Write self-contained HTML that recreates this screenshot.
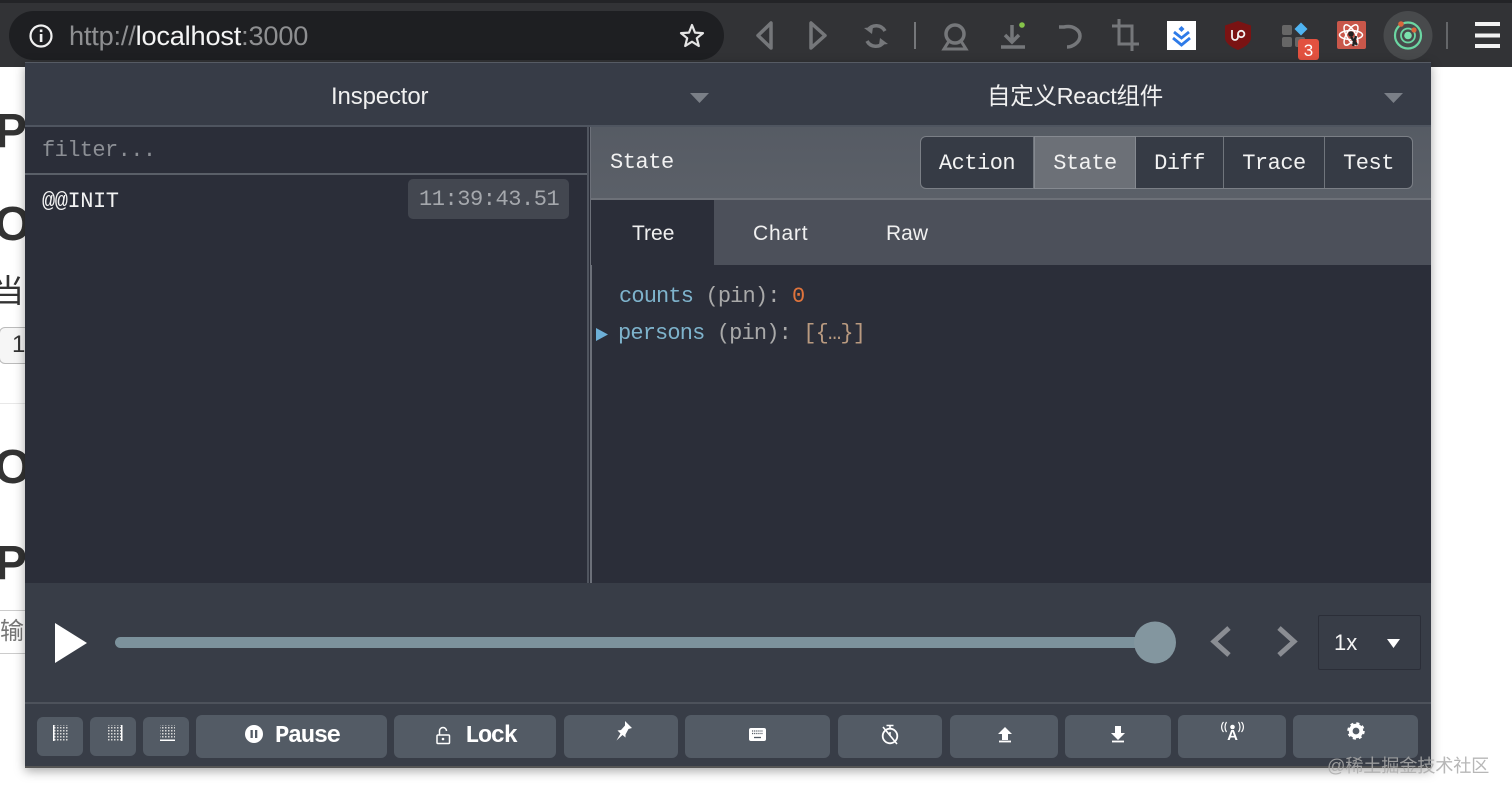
<!DOCTYPE html>
<html><head><meta charset="utf-8"><style>
html,body{margin:0;padding:0;background:#fff}
body{width:1512px;height:798px;position:relative;overflow:hidden;font-family:"Liberation Sans","Noto Sans CJK SC",sans-serif}
.a{position:absolute;white-space:nowrap}
.m{font-family:"Liberation Mono","Noto Sans CJK SC",monospace;font-size:22px;line-height:26px;letter-spacing:-.45px}
.btn{position:absolute;top:715px;height:43px;background:#535b65;border-radius:6px;color:#fff;display:flex;align-items:center;justify-content:center}
.sbtn{top:717px;height:39px}
.seg{position:absolute;top:137px;height:51px;background:#363b45;color:#f2f2f2;font:22px "Liberation Mono",monospace;letter-spacing:-.5px;line-height:50px;text-align:center;box-sizing:border-box;border-right:1px solid #70757c;padding-top:2px}
svg{position:absolute;overflow:visible}
</style></head><body>

<!-- page behind -->
<div class="a" style="left:-5px;top:92px;font:bold 48px/80px 'Liberation Sans';color:#333">P</div>
<div class="a" style="left:-6px;top:185px;font:bold 48px/80px 'Liberation Sans';color:#333">O</div>
<div class="a" style="left:-8px;top:272px;font:32px/38px 'Liberation Sans','Noto Sans CJK SC';color:#333">当</div>
<div class="a" style="left:-1px;top:327px;width:60px;height:37px;border:1px solid #bbb;border-radius:6px;background:#f6f6f6;box-sizing:border-box"></div>
<div class="a" style="left:12px;top:331px;font:24px/28px 'Liberation Sans';color:#333">1</div>
<div class="a" style="left:0;top:403px;width:40px;height:1px;background:#e8e8e8"></div>
<div class="a" style="left:-6px;top:428px;font:bold 48px/80px 'Liberation Sans';color:#333">O</div>
<div class="a" style="left:-5px;top:524px;font:bold 48px/80px 'Liberation Sans';color:#333">P</div>
<div class="a" style="left:-10px;top:610px;width:60px;height:44px;border:1px solid #ccc;background:#fff;box-sizing:border-box"></div>
<div class="a" style="left:0;top:617px;font:24px/30px 'Liberation Sans','Noto Sans CJK SC';color:#777">输</div>

<!-- browser toolbar -->
<div class="a" style="left:0;top:0;width:1512px;height:67px;background:#323336"></div>
<div class="a" style="left:0;top:0;width:1512px;height:3px;background:#232427"></div>
<div class="a" style="left:9px;top:11px;width:715px;height:49px;border-radius:25px;background:#1e1f22"></div>
<svg style="left:0;top:0" width="1512" height="67" fill="none">
 <circle cx="41" cy="36" r="10.5" stroke="#f0f0f0" stroke-width="2.2"/>
 <rect x="39.8" y="34" width="2.6" height="8" fill="#f0f0f0"/><rect x="39.8" y="29.5" width="2.6" height="2.6" fill="#f0f0f0"/>
 <path d="M692 25l3 7.600 8 .5-6.200 5.100 2 7.800-6.800-4.300-6.800 4.300 2-7.800-6.200-5.100 8-.5z" stroke="#e4e4e4" stroke-width="2.200" stroke-linejoin="round"/>
 <g stroke="#75777a" stroke-width="3.500">
  <path d="M771 23v25l-13-12.500z" stroke-linejoin="round"/>
  <path d="M811 23v25l14-12.500z" stroke-linejoin="round"/>
  <path d="M885 31a10 10 0 0 0-17-1M867 41a10 10 0 0 0 17 1" stroke-width="3.500"/>
  <path d="M864 28l8 6 1-7zM888 44l-8-6-1 7z" fill="#75777a" stroke="none"/>
  <path d="M915 22v27" stroke-width="2"/>
  <circle cx="955" cy="34" r="9"/><path d="M949 41l-5 8h22l-5-8" stroke-width="3"/>
  <path d="M1012 25v17M1005 35l7 7 7-7"/><path d="M1001 47h24"/>
  <path d="M1064 27c9-2 16 3 16 9s-7 11-13 11M1059 27h6" stroke-width="3.500"/>
  <path d="M1119 19v25h20M1112 26h20v25" stroke-width="3"/>
  <path d="M1447 22v27" stroke-width="1.500"/>
 </g>
 <circle cx="1022" cy="25" r="2.800" fill="#86c44a"/>
 <!-- jira-like -->
 <rect x="1167" y="21" width="29" height="29" fill="#fff"/>
 <path d="M1181.500 26l3 3-3 3-3-3z" fill="#2e7be8"/>
 <path d="M1174 32l7.500 6 7.500-6M1173 38l8.500 7 8.500-7" stroke="#2e7be8" stroke-width="2.800"/>
 <!-- ublock -->
 <path d="M1238 21l13 4.500v12c0 6-7 10-13 12.500-6-2.500-13-6.500-13-12.500v-12z" fill="#7a1313"/>
 <path d="M1232 30v7a3 3 0 0 0 6 0v-3M1238 34a3.200 3.200 0 1 1 6.400 0 3.200 3.200 0 1 1-6.400 0" stroke="#f2f2f2" stroke-width="1.800"/>
 <!-- apps -->
 <rect x="1282" y="25" width="10" height="10" rx="2" fill="#666"/>
 <rect x="1282" y="37" width="10" height="10" rx="2" fill="#666"/>
 <rect x="1295" y="37" width="10" height="10" rx="2" fill="#666"/>
 <path d="M1301 22.500l6.500 6.500-6.500 6.500-6.500-6.500z" fill="#4fb4f2"/>
 <rect x="1298" y="39" width="21" height="21" rx="3" fill="#e2513f"/>
 <!-- react -->
 <rect x="1337" y="21" width="29" height="28" rx="2" fill="#c9574a"/>
 <g stroke="#fff" stroke-width="1.500"><ellipse cx="1351" cy="35" rx="11.500" ry="4.500"/><ellipse cx="1351" cy="35" rx="11.500" ry="4.500" transform="rotate(60 1351 35)"/><ellipse cx="1351" cy="35" rx="11.500" ry="4.500" transform="rotate(120 1351 35)"/></g>
 <circle cx="1351" cy="34" r="2.800" fill="#222"/><path d="M1351 37l6 8M1356 36l-3 10" stroke="#222" stroke-width="2.500"/>
 <!-- active -->
 <circle cx="1408" cy="35.500" r="24.500" fill="#484a4c"/>
 <circle cx="1408" cy="35.500" r="13" stroke="#6bd6a2" stroke-width="2.200"/>
 <circle cx="1408" cy="35.500" r="7" stroke="#6bd6a2" stroke-width="1.800"/>
 <circle cx="1408" cy="35.500" r="3.800" fill="#7be0ad"/>
 <circle cx="1401" cy="24" r="2.800" fill="#d9663c"/><circle cx="1414" cy="30" r="2.600" fill="#d9663c"/>
 <path d="M1475 24h25M1475 35.500h25M1475 46h25" stroke="#f2f2f2" stroke-width="4"/>
</svg>
<div class="a" style="left:69px;top:20px;font:27.200px/31px 'Liberation Sans';color:#8e8f91;letter-spacing:-.2px">http://<span style="color:#f4f4f4">localhost</span>:3000</div>
<div class="a" style="left:1298px;top:39px;width:21px;height:21px;font:17px/23px 'Liberation Sans';color:#fff;text-align:center">3</div>

<!-- devtools panel -->
<div class="a" style="left:25px;top:62px;width:1406px;height:706px;background:#2b2e39;box-shadow:0 3px 10px rgba(0,0,0,.35)"></div>
<div class="a" style="left:25px;top:62px;width:1406px;height:64px;background:#373c47;border-top:1px solid #565b64;box-sizing:border-box"></div>
<div class="a" style="left:25px;top:125px;width:1406px;height:2px;background:#4f5560"></div>
<div class="a" style="left:331px;top:83px;font:24px/28px 'Liberation Sans';color:#f0f0f0;letter-spacing:-.15px">Inspector</div>
<div class="a" style="left:987px;top:82px;font:23.500px/28px 'Liberation Sans','Noto Sans CJK SC';color:#f0f0f0;letter-spacing:-.3px">自定义React组件</div>
<svg style="left:0;top:0" width="1512" height="130"><path d="M690 93h19l-9.500 10zM1384 93h19l-9.500 10z" fill="#7a7f87"/></svg>

<!-- left pane -->
<div class="a" style="left:25px;top:173px;width:562px;height:2px;background:#5a5f68"></div>
<div class="a" style="left:587px;top:127px;width:2px;height:456px;background:#50555f"></div>
<div class="a" style="left:590px;top:127px;width:1.500px;height:456px;background:#6c7079"></div>
<div class="a m" style="left:42px;top:138px;color:#8c8f95;letter-spacing:-.6px">filter...</div>
<div class="a m" style="left:42px;top:189px;color:#f2f2f2;">@@INIT</div>
<div class="a" style="left:408px;top:179px;width:161px;height:40px;border-radius:5px;background:#434750"></div>
<div class="a m" style="left:419px;top:187px;color:#a5a8ad">11:39:43.51</div>

<!-- right pane -->
<div class="a" style="left:591px;top:127px;width:840px;height:71px;background:linear-gradient(#565b64,#5b6068)"></div>
<div class="a" style="left:591px;top:198px;width:840px;height:2px;background:#6d7178"></div>
<div class="a m" style="left:610px;top:150px;color:#f2f2f2">State</div>
<div class="a" style="left:920px;top:136px;width:493px;height:53px;border:1px solid #7b7f86;border-radius:6px;box-sizing:border-box;background:#363b45"></div>
<div class="seg" style="left:921px;width:113px;border-radius:5px 0 0 5px;background:transparent">Action</div>
<div class="seg" style="left:1034px;width:102px;background:#6c7077;border:1px solid #858990;top:136px;height:53px;color:#f2f2f2;padding-top:2px">State</div>
<div class="seg" style="left:1136px;width:88px">Diff</div>
<div class="seg" style="left:1224px;width:101px">Trace</div>
<div class="seg" style="left:1325px;width:87px;border:0;border-radius:0 5px 5px 0;background:transparent">Test</div>

<div class="a" style="left:591px;top:200px;width:840px;height:65px;background:#4c505a"></div>
<div class="a" style="left:591px;top:200px;width:123px;height:65px;background:#2b2e39"></div>
<div class="a" style="left:632px;top:220px;font:21px/27px 'Liberation Sans';color:#f0f0f0">Tree</div>
<div class="a" style="left:753px;top:220px;font:21px/27px 'Liberation Sans';color:#f0f0f0;letter-spacing:.8px">Chart</div>
<div class="a" style="left:886px;top:220px;font:21px/27px 'Liberation Sans';color:#f0f0f0">Raw</div>

<div class="a m" style="left:619px;top:284px;color:#a9a9a9;letter-spacing:-.85px"><span style="color:#7eb3cc">counts</span> (pin): <span style="color:#e0743c">0</span></div>
<div class="a m" style="left:618px;top:321px;color:#a9a9a9;letter-spacing:-.85px"><span style="color:#7eb3cc">persons</span> (pin): <span style="color:#b99a80">[{…}]</span></div>
<svg style="left:0;top:0" width="700" height="400"><path d="M596 328l12 6.500-12 6.500z" fill="#6db0d8"/></svg>

<!-- slider bar -->
<div class="a" style="left:25px;top:583px;width:1406px;height:120px;background:#383d47"></div>
<div class="a" style="left:25px;top:702px;width:1406px;height:2px;background:#4d525b"></div>
<div class="a" style="left:25px;top:704px;width:1406px;height:64px;background:#383d47;border-bottom:2px solid #555;box-sizing:border-box"></div>
<svg style="left:0;top:580px" width="1512" height="120">
 <path d="M55 43l32 20-32 20z" fill="#fff"/>
 <rect x="115" y="57" width="1030" height="11" rx="5.500" fill="#7c929c"/>
 <circle cx="1155" cy="62.500" r="21" fill="#83969f"/>
 <path d="M1229 48l-15 13.500 15 13.500M1279 48l15 13.500-15 13.500" fill="none" stroke="#8a8d93" stroke-width="5"/>
 <path d="M1387 59h13l-6.500 9z" fill="#fff"/>
</svg>
<div class="a" style="left:1318px;top:615px;width:103px;height:55px;border:1px solid #2b2e38;border-radius:2px;box-sizing:border-box"></div>
<div class="a" style="left:1334px;top:629px;font:22px/27px 'Liberation Sans';color:#f5f5f5">1x</div>

<!-- bottom buttons -->
<div class="btn sbtn" style="left:37px;width:46px"></div>
<div class="btn sbtn" style="left:90px;width:46px"></div>
<div class="btn sbtn" style="left:143px;width:46px"></div>
<div class="btn" style="left:196px;width:191px;font:bold 24px/30px 'Liberation Mono',monospace;box-sizing:border-box;justify-content:flex-start;padding-left:79px;letter-spacing:-1.500px">Pause</div>
<div class="btn" style="left:394px;width:162px;font:bold 24px/30px 'Liberation Mono',monospace;justify-content:flex-start;padding-left:71px;box-sizing:border-box;letter-spacing:-1.500px">Lock</div>
<div class="btn" style="left:564px;width:114px"></div>
<div class="btn" style="left:685px;width:145px"></div>
<div class="btn" style="left:838px;width:104px"></div>
<div class="btn" style="left:950px;width:108px"></div>
<div class="btn" style="left:1065px;width:106px"></div>
<div class="btn" style="left:1178px;width:108px"></div>
<div class="btn" style="left:1293px;width:125px"></div>

<svg style="left:0;top:700px" width="1512" height="70" fill="none">
 <defs><pattern id="d" width="3" height="3" patternUnits="userSpaceOnUse"><rect width="1.500" height="1.500" fill="#d8d8d8"/></pattern></defs>
 <rect x="54" y="25" width="15" height="16" fill="url(#d)"/><rect x="53" y="25" width="1.500" height="16" fill="#fff"/>
 <rect x="107" y="25" width="15" height="16" fill="url(#d)"/><rect x="121" y="25" width="1.500" height="16" fill="#fff"/>
 <rect x="160" y="25" width="15" height="14" fill="url(#d)"/><rect x="160" y="39.500" width="15" height="1.500" fill="#fff"/>
 <circle cx="254" cy="34" r="9" fill="#fff"/><rect x="250.500" y="30" width="2.300" height="8" fill="#535b65"/><rect x="255" y="30" width="2.300" height="8" fill="#535b65"/>
 <rect x="437" y="35" width="12.500" height="8.500" rx="1" stroke="#fff" stroke-width="1.500"/><circle cx="443" cy="39" r="1.300" fill="#fff"/><path d="M439.500 35v-4a3.500 3.500 0 0 1 7 0" stroke="#fff" stroke-width="1.500"/>
 <path d="M625 21l7 7-3.500 1-3 5.500 0 3-3-2.500-6 5.500 4-7-3-3 3.500-.5 4-4.500z" fill="#fff"/>
 <rect x="749" y="28" width="17" height="13" rx="2" fill="#fff"/><path d="M752 31h11M752 33.500h11" stroke="#535b65" stroke-width="1.300" stroke-dasharray="1.200 .9"/><path d="M754 37.500h7" stroke="#535b65" stroke-width="1.300"/>
 <circle cx="890" cy="36" r="7.300" stroke="#fff" stroke-width="1.800"/><path d="M886.500 25.500h7M890 25.500v3M883 27l14 17M890 32v4" stroke="#fff" stroke-width="1.600"/>
 <path d="M1005 27l7 7h-4v6h-6v-6h-4z" fill="#fff"/><path d="M999 41.500h12" stroke="#fff" stroke-width="1.800"/>
 <path d="M1118 40l-7-7h4v-7h6v7h4z" fill="#fff"/><path d="M1112 41.500h12" stroke="#fff" stroke-width="1.800"/>
 <text x="1232.500" y="40" text-anchor="middle" font-family="Liberation Sans" font-weight="bold" font-size="15" fill="#fff">A</text>
 <circle cx="1232.500" cy="27" r="2.300" fill="#fff"/><path d="M1226.500 22c-2 3-2 7 0 10M1238.500 22c2 3 2 7 0 10M1223.500 22c-2.500 3-2.500 7 0 10M1241.500 22c2.500 3 2.500 7 0 10" stroke="#fff" stroke-width="1.200"/>
 <circle cx="1356" cy="31" r="5.300" stroke="#fff" stroke-width="3.800"/><circle cx="1356" cy="31" r="7.500" stroke="#fff" stroke-width="2.500" stroke-dasharray="3 2.900"/>
</svg>

<div class="a" style="left:1327px;top:754px;font:18.200px/24px 'Liberation Sans','Noto Sans CJK SC';color:rgba(170,170,170,.85);letter-spacing:-.2px">@稀土掘金技术社区</div>
</body></html>
